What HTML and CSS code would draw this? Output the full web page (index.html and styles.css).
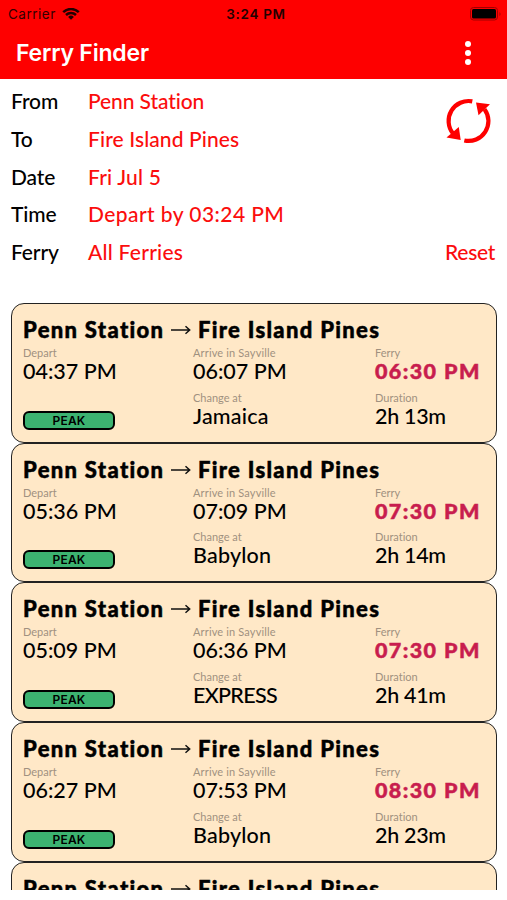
FILE: index.html
```html
<!DOCTYPE html>
<html lang="en">
<head>
    <meta charset="UTF-8">
    <meta name="viewport" content="width=device-width, initial-scale=1.0">
    <title>Ferry Finder</title>

    <link rel="stylesheet" href="styles.css">
</head>
<body>

    <div class="app">
        <header>
            <div class="status">
                <div class="carrier">
                    <span>Carrier</span>
                    <svg width="18" height="12" viewBox="0 0 18 12">
                        <path d="M1.2 4.2a11.2 11.2 0 0 1 15.6 0" />
                        <path d="M4 7a7.2 7.2 0 0 1 10 0" />
                        <path class="fill" d="M6.1 8.9a4.2 4.2 0 0 1 5.8 0L9 11.8z" />
                    </svg>
                </div>
                <div class="clock">3:24 PM</div>
                <svg class="battery" width="32" height="14" viewBox="0 0 32 14">
                    <rect x="0.5" y="0.5" width="27" height="12.5" rx="3" />
                    <rect class="level" x="2" y="2" width="24" height="9.5" rx="1.5" />
                    <path d="M29.5 5v4a2.5 2.5 0 0 0 0-4z" />
                </svg>
            </div>
            <div class="toolbar">
                <h1>Ferry Finder</h1>
                <div class="menu"><i></i><i></i><i></i></div>
            </div>
        </header>

        <section class="search">
            <dl>
                <dt>From</dt><dd class="from">Penn Station</dd>
                <dt>To</dt><dd class="to">Fire Island Pines</dd>
                <dt>Date</dt><dd class="date">Fri Jul 5</dd>
                <dt>Time</dt><dd class="time">Depart by 03:24 PM</dd>
                <dt>Ferry</dt><dd class="ferries">All Ferries</dd>
            </dl>
            <div class="actions">
                <svg class="swap" width="46" height="46" viewBox="0 0 46 46">
                    <path class="arc" d="M27.3 3.4A19.9 19.9 0 0 0 8 35.4" />
                    <path class="arc" d="M19.3 42.5A19.9 19.9 0 0 0 39.5 11.2" />
                    <path d="M1.5 39.4L13.8 29L15.7 42z" />
                    <path d="M31 4.6L45 6.3L33.5 17.3z" />
                </svg>
                <a class="reset">Reset</a>
            </div>
        </section>

        <main id="trips"></main>
    </div>

    <script>
        let trips = [
            { depart: '04:37 PM', arrive: '06:07 PM', ferry: '06:30 PM', change: 'Jamaica', duration: '2h 13m' },
            { depart: '05:36 PM', arrive: '07:09 PM', ferry: '07:30 PM', change: 'Babylon', duration: '2h 14m' },
            { depart: '05:09 PM', arrive: '06:36 PM', ferry: '07:30 PM', change: 'EXPRESS', duration: '2h 41m' },
            { depart: '06:27 PM', arrive: '07:53 PM', ferry: '08:30 PM', change: 'Babylon', duration: '2h 23m' }
        ];

        let arrow = '<svg width="20" height="10" viewBox="0 0 20 10"><path d="M0 5H18.5M14.5 1.2L18.7 5L14.5 8.8" /></svg>';
        let title = `<h2><span>Penn Station</span>${arrow}<span>Fire Island Pines</span></h2>`;

        let cards = trips.map(t => `
            <article class="card">
                ${title}
                <div class="grid">
                    <div><small>Depart</small><p>${t.depart}</p></div>
                    <div><small class="arrive">Arrive in Sayville</small><p>${t.arrive}</p></div>
                    <div><small>Ferry</small><p class="ferry">${t.ferry}</p></div>
                    <div class="peak">PEAK</div>
                    <div><small>Change at</small><p class="change ${t.change.toLowerCase()}">${t.change}</p></div>
                    <div><small>Duration</small><p class="duration">${t.duration}</p></div>
                </div>
            </article>`).join('');

        // the next trip only peeks in at the bottom
        document.getElementById('trips').innerHTML = cards + `<article class="card">${title}</article>`;
    </script>

</body>
</html>
```
FILE: styles.css
```css
*{
    box-sizing: border-box;
    margin: 0;
    padding: 0;
}

body{
    background: #fff;
    font-family: Lato, "Liberation Sans", sans-serif;
    font-variant-ligatures: none;
    color: #000;
}

.app{
    height: 890px;
    overflow: hidden;
    display: flex;
    flex-direction: column;
}

header{
    flex: none;
    height: 79px;
    background: #fe0000;
    font-family: Inter, "Liberation Sans", sans-serif;
}

.status{
    height: 27px;
    padding: 0 5px 0 8px;
    display: grid;
    grid-template-columns: 1fr auto 1fr;
    align-items: center;
    font-size: 13.5px;
    letter-spacing: 0.5px;
    color: #300;
}

.carrier{
    display: flex;
    align-items: center;
    gap: 6px;
}

.carrier svg path{
    fill: none;
    stroke: #200;
    stroke-width: 2.5;
}

.carrier svg .fill{
    fill: #200;
    stroke: none;
}

.clock{
    padding-left: 2px;
    font-weight: 600;
    letter-spacing: 0.7px;
    color: #200;
}

.battery{
    justify-self: end;
    fill: #a00000;
}

.battery rect{
    fill: none;
    stroke: #a00000;
}

.battery .level{
    fill: #000;
    stroke: none;
}

.toolbar{
    height: 52px;
    padding: 0 36px 0 16px;
    display: flex;
    align-items: center;
    justify-content: space-between;
}

.toolbar h1{
    font-size: 23px;
    font-weight: 600;
    letter-spacing: -0.2px;
    color: #fff;
}

.menu{
    display: flex;
    flex-direction: column;
    gap: 2.6px;
}

.menu i{
    width: 6px;
    height: 6px;
    border-radius: 50%;
    background: #fff;
}

.search{
    flex: none;
    height: 224px;
    padding: 3px 12px 0 11px;
    display: flex;
    justify-content: space-between;
}

.search dl{
    display: grid;
    grid-template-columns: 77px auto;
    grid-auto-rows: 37.8px;
    align-content: start;
    line-height: 37.8px;
    font-size: 21px;
    font-weight: 500;
    white-space: nowrap;
}

.search dt{
    letter-spacing: -0.1px;
}

.search dd,
.reset{
    color: #fb0d0d;
}

.search .from{
    letter-spacing: -0.1px;
}

.search .to{
    letter-spacing: 0.1px;
}

.search .date{
    letter-spacing: 0.2px;
}

.search .time{
    letter-spacing: 0.43px;
}

.search .ferries{
    letter-spacing: 0.25px;
}

.actions{
    height: 189px;
    display: flex;
    flex-direction: column;
    justify-content: space-between;
    align-items: flex-end;
}

.swap{
    margin: 16px 4px 0 0;
    fill: #fe0000;
}

.swap .arc{
    fill: none;
    stroke: #fe0000;
    stroke-width: 4.2;
}

.reset{
    line-height: 37.8px;
    font-size: 21px;
    font-weight: 500;
    letter-spacing: -0.3px;
}

#trips{
    padding: 0 10px 0 11px;
}

.card{
    height: 139.7px;
    padding: 11px 11px 0;
    border: 1.4px solid #222;
    border-radius: 13px;
    background: #ffe8c7;
}

.card h2{
    display: flex;
    height: 30px;
    line-height: 29px;
    font-size: 22px;
    font-weight: 900;
    letter-spacing: 1.32px;
    -webkit-text-stroke: 0.5px #000;
    white-space: nowrap;
}

.card h2 svg{
    margin: 10px 7px 0 6.5px;
    fill: none;
    stroke: #111;
    stroke-width: 1.5;
}

.grid{
    display: grid;
    grid-template-columns: 170px 182px auto;
    grid-auto-rows: 44.7px;
    white-space: nowrap;
}

.grid small{
    display: block;
    height: 15px;
    line-height: 15px;
    font-size: 11px;
    color: #9f9180;
}

.grid .arrive{
    letter-spacing: 0.15px;
}

.grid p{
    line-height: 22.5px;
    font-size: 21.5px;
    font-weight: 500;
}

.grid .change{
    letter-spacing: 0.2px;
}

.grid .express{
    letter-spacing: -0.7px;
}

.grid .duration{
    letter-spacing: -0.3px;
}

.grid .ferry{
    font-weight: 900;
    letter-spacing: 1.4px;
    -webkit-text-stroke: 0.5px #c81d4e;
    color: #c81d4e;
}

.peak{
    width: 92px;
    height: 19px;
    margin-top: 21px;
    border: 2px solid #000;
    border-radius: 6px;
    background: #3cb371;
    line-height: 15px;
    text-align: center;
    font-family: Inter, sans-serif;
    font-size: 12px;
    font-weight: 600;
    letter-spacing: 0.2px;
}
```
